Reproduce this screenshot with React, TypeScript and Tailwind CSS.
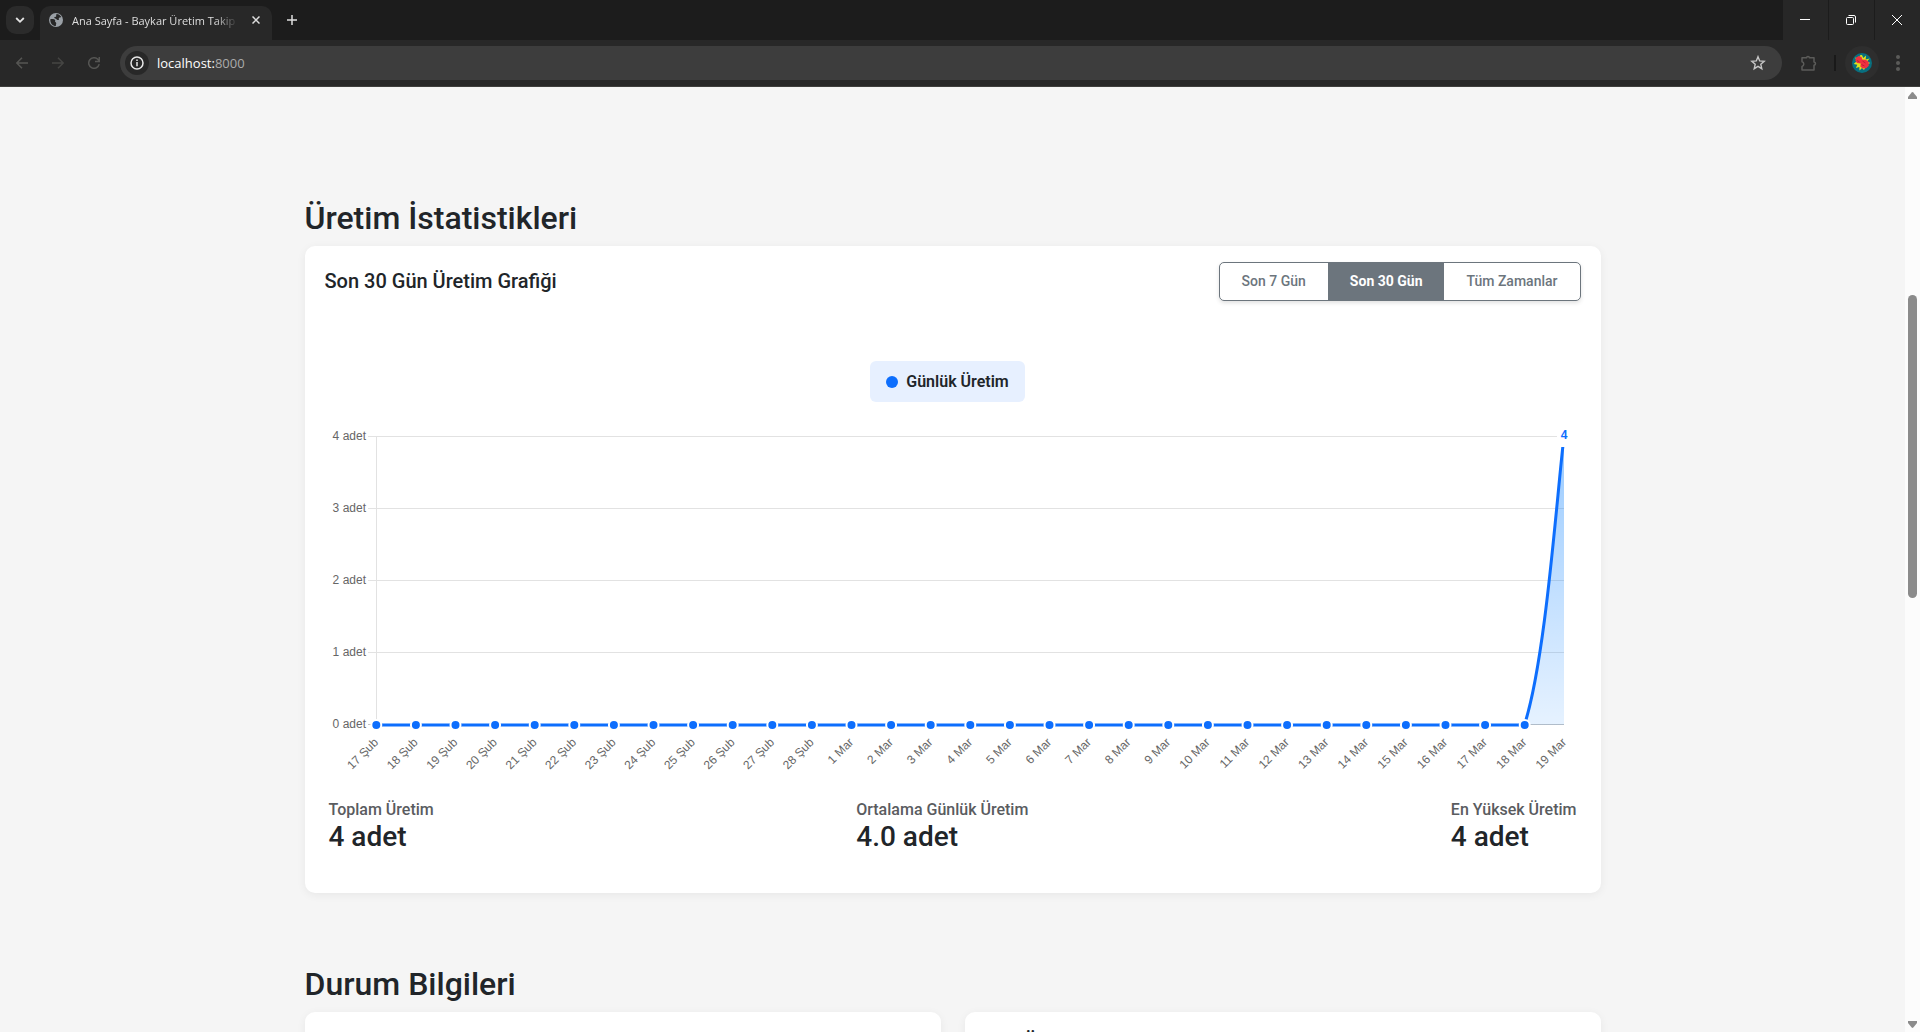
import React from "react";

const days = [
  "17 Şub", "18 Şub", "19 Şub", "20 Şub", "21 Şub", "22 Şub", "23 Şub", "24 Şub",
  "25 Şub", "26 Şub", "27 Şub", "28 Şub", "1 Mar", "2 Mar", "3 Mar", "4 Mar",
  "5 Mar", "6 Mar", "7 Mar", "8 Mar", "9 Mar", "10 Mar", "11 Mar", "12 Mar",
  "13 Mar", "14 Mar", "15 Mar", "16 Mar", "17 Mar", "18 Mar", "19 Mar",
];

const stats = [
  { label: "Toplam Üretim", value: "4 adet" },
  { label: "Ortalama Günlük Üretim", value: "4.0 adet" },
  { label: "En Yüksek Üretim", value: "4 adet" },
];

function TabStrip() {
  return (
    <div className="flex h-10 bg-[#1c1c1c]">
      <div className="flex min-w-0 flex-1 items-end">
        <button
          aria-label="Sekmelerde ara"
          className="mb-1.5 ml-1.5 flex h-7 w-7 items-center justify-center rounded-[10px] bg-[#2b2b2b]"
        >
          <svg width="10" height="10" viewBox="0 0 10 10" fill="none" stroke="#e3e3e3" strokeWidth="1.8">
            <path d="M1.2 3 5 6.8 8.8 3" />
          </svg>
        </button>
        <div className="ml-1.5 flex h-[34px] w-[232px] items-center rounded-t-[10px] bg-[#282828] pb-1.5 pl-2 pr-2">
          <svg className="shrink-0" width="16" height="16" viewBox="0 0 16 16">
            <circle cx="8" cy="8" r="7" fill="#9aa0a6" />
            <path
              d="M2.3 7.2c1.6-.1 4.2-.3 4.8.8.5 1-.6 1.4.3 2.1.9.6 1.1 1.2.6 2.5-.2.5-.1 1-.1 1.5C4.600 14 2.100 11.400 2.300 7.200ZM8.600 1.900c2.300.2 3.900 1.500 4.700 3.200-.9.7-1.500.2-2.300.9-.8.8.6 1.400-.4 2-1 .5-1.700-.7-2.700-1.300-.9-.6-1.600-.2-1.600-1.200 0-.8 1.700-.3 1.900-1.200.2-.7-.4-1.300.4-2.400Z"
              fill="#282828"
            />
          </svg>
          <span className="ml-2 w-[168px] whitespace-nowrap pt-0.5 text-[11px] leading-4 text-[#dedede] [mask-image:linear-gradient(to_right,black_86%,transparent)]">
            Ana Sayfa - Baykar Üretim Takip
          </span>
          <button aria-label="Sekmeyi kapat" className="ml-2.5 flex h-4 w-4 items-center justify-center">
            <svg width="8" height="8" viewBox="0 0 8 8" stroke="#dedede" strokeWidth="1.5">
              <path d="M.5.500 7.500 7.500M7.500.500.500 7.500" />
            </svg>
          </button>
        </div>
        <button aria-label="Yeni sekme" className="mb-1.5 ml-1.5 flex h-7 w-7 items-center justify-center">
          <svg width="10" height="10" viewBox="0 0 10 10" stroke="#dedede" strokeWidth="1.500">
            <path d="M5 0v10M0 5h10" />
          </svg>
        </button>
      </div>
      <div className="flex gap-px text-white">
        <button aria-label="Simge durumuna küçült" className="flex w-[45px] items-center justify-center bg-[#272727] pr-0.5">
          <svg width="10" height="10" viewBox="0 0 10 10" stroke="currentColor"><path d="M0 4.500h10" /></svg>
        </button>
        <button aria-label="Önceki boyut" className="flex w-[45px] items-center justify-center bg-[#272727] pr-0.5">
          <svg width="10" height="10" viewBox="0 0 10 10" fill="none" stroke="currentColor">
            <rect x=".5" y="2.500" width="7" height="7" rx="1" />
            <path d="M2.500.500H8A1.500 1.500 0 0 1 9.500 2v5.500" />
          </svg>
        </button>
        <button aria-label="Kapat" className="flex w-[45px] items-center justify-center bg-[#272727] pr-0.5">
          <svg width="10" height="10" viewBox="0 0 10 10" stroke="currentColor"><path d="M0 0 10 10M10 0 0 10" /></svg>
        </button>
      </div>
    </div>
  );
}

function Toolbar() {
  return (
    <div className="flex h-[47px] items-start border-b border-[#3f3f3d] bg-[#282828] pt-1.5">
      <div className="flex h-[34px] items-center gap-6 pl-4 text-[#555553]">
        <button aria-label="Geri">
          <svg width="12" height="12" viewBox="0 0 12 12" fill="none" stroke="currentColor" strokeWidth="1.500">
            <path d="M12 6H1M6 .700.800 6 6 11.300" />
          </svg>
        </button>
        <button aria-label="İleri" className="text-[#454543]">
          <svg width="12" height="12" viewBox="0 0 12 12" fill="none" stroke="currentColor" strokeWidth="1.500">
            <path d="M0 6h11M6 .700 11.200 6 6 11.300" />
          </svg>
        </button>
        <button aria-label="Yenile">
          <svg width="12" height="12" viewBox="0 0 12 12" fill="none" stroke="currentColor" strokeWidth="1.500">
            <path d="M11.200 7.200A5.300 5.300 0 1 1 9.800 2.300L11.200 4M11.300 0v4.500H7" />
          </svg>
        </button>
      </div>
      <div className="ml-5 flex h-[34px] min-w-0 flex-1 items-center rounded-full bg-[#3d3d3d] pl-[5px] pr-4">
        <button aria-label="Site bilgileri" className="flex h-6 w-6 shrink-0 items-center justify-center rounded-full bg-[#282828]">
          <svg width="14" height="14" viewBox="0 0 14 14" fill="none" stroke="#e8e8e8" strokeWidth="1.500">
            <circle cx="7" cy="7" r="6" />
            <path d="M7 6v4.300M7 3.500V5" />
          </svg>
        </button>
        <a href="#" className="ml-2 flex-1 pt-0.5 text-[13px] text-[#ababab]">
          <span className="text-white">localhost:</span>8000
        </a>
        <button aria-label="Bu sekmeye yer işareti koy">
          <svg width="16" height="16" viewBox="0 0 16 16" fill="none" stroke="#c7c7c7" strokeWidth="1.400">
            <path d="m8 1.700 1.700 4.200 4.500.4-3.400 3 1 4.400L8 11.400l-3.800 2.300 1-4.400-3.400-3 4.500-.4Z" />
          </svg>
        </button>
      </div>
      <div className="flex h-[34px] items-center pl-[18px]">
        <button aria-label="Uzantılar">
          <svg width="17" height="17" viewBox="0 0 17 17" fill="none" stroke="#5b5b59" strokeWidth="1.500" strokeLinejoin="round">
            <path d="M2 2.800H6.500c.2-1.900 2.800-1.900 3 0H14V7c2 .2 2 3 0 3.200v4.900H2v-3.700c2.400-.4 2.400-4.200 0-4.600Z" />
          </svg>
        </button>
        <div className="ml-[17px] h-4 w-0.5 bg-[#191919]" />
        <button aria-label="Profil" className="ml-[9px] flex h-[34px] w-[34px] items-center justify-center rounded-full bg-[#2e2e2e]">
          <svg width="20" height="20" viewBox="0 0 20 20">
            <circle cx="10" cy="10" r="10" fill="#086f80" />
            <path d="m10 2 1.300 3L14 2.600l-.3 3.800 4-.8-2.800 3 3.500 1.500-3.600 1.400L12 17l-2-2-2.500 2.600-.2-3.600-3.400 1 1.400-3.200-3.600-.9L5 8 3 4.500l4 1L8 2.300Z" fill="#dfe21c" />
            <path d="M4 4.800 6.500 3l3 1 .8 2.500 3.500.3 2.800 2 .2 4-2.600 2.500-3.500.3-2.400-2 .5-3L5 10 3.300 7.500Z" fill="#ee3040" />
            <path d="M5 7.500 7.500 9M10.500 8l3 2M9.500 11.500l3 1.500" stroke="#b92334" fill="none" />
          </svg>
        </button>
        <button aria-label="Menü" className="ml-[17px] mr-5 flex flex-col gap-0.5">
          <span className="h-1 w-1 rounded-full bg-[#5b5b59]" />
          <span className="h-1 w-1 rounded-full bg-[#5b5b59]" />
          <span className="h-1 w-1 rounded-full bg-[#5b5b59]" />
        </button>
      </div>
    </div>
  );
}

const left = 51;
const right = 1239;
const top = 34;
const bottom = 322;
const step = (right - left) / (days.length - 1);

function ProductionChart() {
  const lastZero = right - step;
  const curve = `C${lastZero + 21} ${bottom - 64} ${right - 8} ${top + 69} ${right} ${top}`;
  return (
    <svg className="block w-full" viewBox="0 0 1256 380" fontFamily="'Liberation Sans', Arial, sans-serif" fontSize="12" fill="#666">
      <defs>
        <linearGradient id="area" gradientUnits="userSpaceOnUse" x1="0" y1={top} x2="0" y2={bottom}>
          <stop offset="0" stopColor="#007bff" stopOpacity="0.4" />
          <stop offset="1" stopColor="#007bff" stopOpacity="0.1" />
        </linearGradient>
      </defs>
      {[4, 3, 2, 1, 0].map((n, i) => (
        <g key={n}>
          <path d={`M${left - 8} ${top + i * 72 + 0.5}H${right}`} stroke={n === 0 ? "#c4c4c4" : "#e2e2e2"} />
          <text x={left - 10} y={top + i * 72 + 4} textAnchor="end">{n} adet</text>
        </g>
      ))}
      <path d={`M${left + 0.5} ${top}V${bottom}`} stroke="#e2e2e2" />
      <path d={`M${lastZero} ${bottom + 1}${curve}V${bottom + 1}Z`} fill="url(#area)" />
      <path d={`M${left} ${bottom + 1}H${lastZero}${curve}`} fill="none" stroke="#0d6efd" strokeWidth="3" />
      {days.slice(0, -1).map((d, i) => (
        <circle key={d} cx={left + 0.3 + i * step} cy={bottom + 1} r="5" fill="#0d6efd" stroke="#fff" strokeWidth="2" />
      ))}
      {days.map((d, i) => (
        <text key={d} textAnchor="end" transform={`translate(${left + 3 + i * step} ${bottom + 19}) rotate(-45)`}>{d}</text>
      ))}
      <rect x="1232" y="22" width="15" height="23" rx="2" fill="#fff" />
      <text x="1239" y="37" textAnchor="middle" fontWeight="700" fill="#0d6efd">4</text>
    </svg>
  );
}

const cardClass = "rounded-[10px] bg-white shadow-[0_2px_10px_rgba(0,0,0,0.06)]";

function RangeButtons() {
  return (
    <div className="flex rounded-[5px] border border-[#6c757d] text-sm font-medium text-[#6c757d] shadow-[0_2px_4px_rgba(0,0,0,0.12)]">
      <button className="px-[22px] py-2 leading-[21px]">Son 7 Gün</button>
      <button className="bg-[#6c757d] px-[22px] py-2 font-bold leading-[21px] text-white" aria-pressed="true">Son 30 Gün</button>
      <button className="px-[22px] py-2 leading-[21px]">Tüm Zamanlar</button>
    </div>
  );
}

function Scrollbar() {
  return (
    <div className="flex w-[15px] shrink-0 flex-col items-center bg-[#fcfcfc] pb-1 pt-[5px]" aria-hidden="true">
      <svg width="9" height="7" viewBox="0 0 9 7" fill="#8b8b8b"><path d="M3.700.400q.800-.8 1.600 0L9 5v2H0V5Z" /></svg>
      <div className="mt-[196px] h-[303px] w-[9px] shrink-0 rounded-full bg-[#8b8b8b]" />
      <svg className="mt-auto" width="9" height="7" viewBox="0 0 9 7" fill="#8b8b8b"><path d="M0 0h9v2L5.300 6.600q-.8.800-1.600 0L0 2Z" /></svg>
    </div>
  );
}

export default function App() {
  return (
    <div className="flex h-screen flex-col overflow-hidden bg-[#f5f5f5]">
      <header className="shrink-0 font-['Open_Sans','Noto_Sans',sans-serif]">
        <TabStrip />
        <Toolbar />
      </header>
      <div className="flex min-h-0 flex-1">
        <main className="min-w-0 flex-1 overflow-hidden font-[Roboto,sans-serif] text-[#212529]">
          <div className="mx-auto max-w-[1320px] px-3 pt-28">
            <section>
              <h2 className="mb-2 text-[32px] font-medium leading-[39px]">Üretim İstatistikleri</h2>
              <div className={cardClass}>
                <div className="flex items-center justify-between px-5 py-4">
                  <h3 className="pb-0.5 text-xl font-medium leading-6">Son 30 Gün Üretim Grafiği</h3>
                  <RangeButtons />
                </div>
                <div className="px-5 pb-[42px] pt-11">
                  <div className="flex justify-center pr-2.5">
                    <div className="flex items-center gap-2 rounded-md bg-[#e7f0ff] px-4 py-2 text-base font-semibold leading-[25px]">
                      <span className="h-3 w-3 rounded-full bg-[#0d6efd]" />
                      Günlük Üretim
                    </div>
                  </div>
                  <ProductionChart />
                  <dl className="flex justify-between px-1 pt-4">
                    {stats.map((s) => (
                      <div key={s.label}>
                        <dt className="text-base font-medium leading-6 text-[#5a5c5f]">{s.label}</dt>
                        <dd className="text-[28px] font-medium leading-[29px]">{s.value}</dd>
                      </div>
                    ))}
                  </dl>
                </div>
              </div>
            </section>
            <section className="mt-[72px]">
              <h2 className="mb-2 text-[32px] font-medium leading-[39px]">Durum Bilgileri</h2>
              <div className="grid grid-cols-2 gap-6">
                <div className={cardClass} />
                <div className={`${cardClass} px-5 pb-5 pt-[17px]`}>
                  <h3 className="text-xl font-medium leading-6">Son Üretimler</h3>
                </div>
              </div>
            </section>
          </div>
        </main>
        <Scrollbar />
      </div>
    </div>
  );
}
